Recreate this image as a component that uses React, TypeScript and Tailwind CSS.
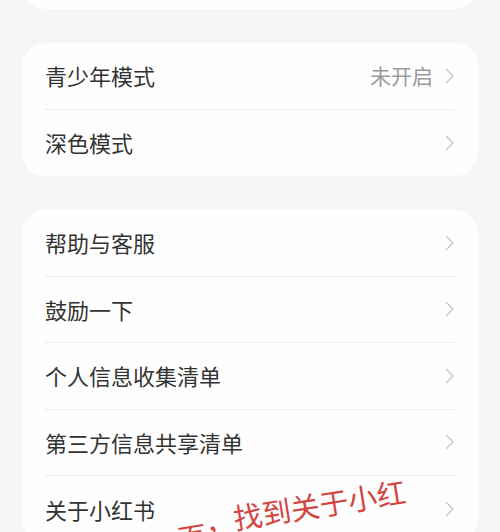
const font = { fontFamily: '"Noto Sans CJK SC", "Noto Sans", sans-serif' };

type Row = { label: string; value?: string };

const groupOne: Row[] = [{ label: "青少年模式", value: "未开启" }, { label: "深色模式" }];

const groupTwo: Row[] = [
  { label: "帮助与客服" },
  { label: "鼓励一下" },
  { label: "个人信息收集清单" },
  { label: "第三方信息共享清单" },
  { label: "关于小红书" },
];

function Chevron() {
  return (
    <svg width="10" height="16" viewBox="0 0 10 16" fill="none" className="shrink-0">
      <path d="M1.5 1.5L8 8L1.5 14.5" stroke="#c6c6c8" strokeWidth="1.4" strokeLinecap="round" strokeLinejoin="round" />
    </svg>
  );
}

function SettingsRow({ row, last }: { row: Row; last: boolean }) {
  return (
    <div className="px-[23px]">
      <div
        className={`flex h-[66.5px] items-center justify-between ${last ? "" : "border-b border-[#ececec]"}`}
      >
        <span className="text-[22px] text-[#333333]">{row.label}</span>
        <div className="flex items-center gap-[12px]">
          {row.value && <span className="text-[21px] text-[#9a9a9a]">{row.value}</span>}
          <Chevron />
        </div>
      </div>
    </div>
  );
}

function Card({ rows }: { rows: Row[] }) {
  return (
    <div className="mx-[22px] mt-[34px] rounded-[24px] bg-[#fefefe]">
      {rows.map((row, i) => (
        <SettingsRow key={row.label} row={row} last={i === rows.length - 1} />
      ))}
    </div>
  );
}

export default function App() {
  return (
    <div className="relative h-[532px] overflow-hidden bg-[#f6f6f6]" style={font}>
      <div className="mx-[22px] -mt-[51px] h-[60px] rounded-[24px] bg-[#fefefe]" />

      <Card rows={groupOne} />
      <Card rows={groupTwo} />

      {/* handwritten-style annotation laid over the list */}
      <div className="absolute left-[176px] top-[512px] origin-left -rotate-[9deg] whitespace-nowrap text-[29px] leading-[29px] text-[#d4453f]">
        <span className="inline-block translate-y-[12px]">页</span>，找到关于小红
      </div>
    </div>
  );
}
